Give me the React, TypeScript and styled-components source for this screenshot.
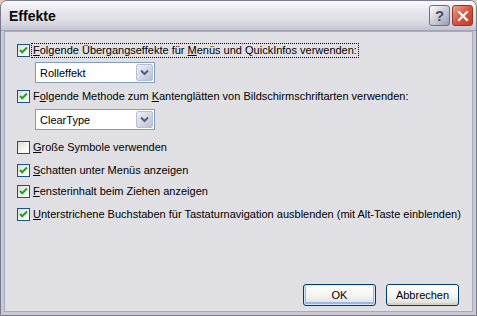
import React from "react";
import styled, { createGlobalStyle } from "styled-components";

const Global = createGlobalStyle`
	html, body {
		margin: 0;
		padding: 0;
		background: #ecc4b8;
	}
	#root {
		width: 477px;
		height: 316px;
	}
`;

const Window = styled.div`
	width: 477px;
	height: 316px;
	box-sizing: border-box;
	border: 1px solid #7a7a8c;
	border-radius: 7px 7px 0 0;
	background: #c9c9d6;
	display: flex;
	flex-direction: column;
	font-family: "Liberation Sans", sans-serif;
	overflow: hidden;
`;

const TitleBar = styled.div`
	height: 29px;
	flex: none;
	display: flex;
	align-items: center;
	padding: 0 3px 0 8px;
	background: linear-gradient(#fbfbfd 0%, #e8e8ee 30%, #dcdce4 70%, #c4c4d2 100%);
	border-bottom: 1px solid #a4a4b6;
`;

const Title = styled.div`
	flex: 1;
	font-weight: bold;
	font-size: 14px;
	color: #0a0a0a;
	padding-top: 1px;
`;

const CapButton = styled.div<{ $close?: boolean }>`
	width: 21px;
	height: 21px;
	box-sizing: border-box;
	margin-left: 2px;
	border-radius: 3px;
	border: 1px solid ${(p) => (p.$close ? "#8a3a34" : "#6c6c84")};
	background: ${(p) =>
		p.$close
			? "linear-gradient(135deg, #f2a390 0%, #d8563e 50%, #c13a26 100%)"
			: "linear-gradient(135deg, #ffffff 0%, #c8c8d6 55%, #9a9ab4 100%)"};
	display: flex;
	align-items: center;
	justify-content: center;
	color: #4a4a66;
	font-weight: bold;
	font-size: 15px;
`;

const Frame = styled.div`
	flex: 1;
	display: flex;
	padding: 0 3px 3px 3px;
`;

const Client = styled.div`
	flex: 1;
	min-width: 0;
	background: #e0dfe3;
	border: 1px solid #a8a8b8;
	display: flex;
	flex-direction: column;
	padding: 0 13px 0 12px;
	font-size: 11px;
	color: #000;
`;

const Row = styled.label<{ $top: number }>`
	display: flex;
	align-items: center;
	gap: 2px;
	margin-top: ${(p) => p.$top}px;
	height: 13px;
`;

const Box = styled.span`
	width: 13px;
	height: 13px;
	box-sizing: border-box;
	border: 1px solid #1c5180;
	background: linear-gradient(135deg, #dcdcd6 0%, #f6f6f2 60%, #ffffff 100%);
	display: flex;
	align-items: center;
	justify-content: center;
	flex: none;
`;

const Label = styled.span<{ $focus?: boolean }>`
	white-space: nowrap;
	padding: 0 1px;
	outline: ${(p) => (p.$focus ? "1px dotted #000" : "none")};
	line-height: 13px;
`;

const Select = styled.div<{ $top: number }>`
	margin: ${(p) => p.$top}px 0 0 18px;
	width: 120px;
	height: 21px;
	box-sizing: border-box;
	border: 1px solid #7f9db9;
	background: #fff;
	display: flex;
	align-items: center;
	padding: 1px;
`;

const SelectText = styled.span`
	flex: 1;
	padding-left: 3px;
`;

const SelectButton = styled.span`
	width: 17px;
	height: 17px;
	box-sizing: border-box;
	border: 1px solid #b4c0d8;
	border-radius: 2px;
	background: linear-gradient(135deg, #f0f0f6 0%, #d2d4e0 60%, #babed0 100%);
	display: flex;
	align-items: center;
	justify-content: center;
`;

const Footer = styled.div`
	margin-top: auto;
	display: flex;
	justify-content: flex-end;
	gap: 10px;
	padding-bottom: 5px;
`;

const Button = styled.div<{ $default?: boolean }>`
	width: 73px;
	height: 22px;
	box-sizing: border-box;
	border: 1px solid #003c74;
	border-radius: 3px;
	background: linear-gradient(#ffffff 0%, #f2f2ee 60%, #dcdcd6 100%);
	box-shadow: ${(p) =>
		p.$default ? "inset 0 0 0 1px #cee7ff, inset 0 -1px 0 2px #98b8ea" : "inset 0 -2px 0 #d6d0c5"};
	display: flex;
	align-items: center;
	justify-content: center;
`;

const Check = () => (
	<svg width="9" height="9" viewBox="0 0 9 9">
		<path d="M1 4 L3.2 6.3 L8 1.5" fill="none" stroke="#21a121" strokeWidth="2" />
	</svg>
);

const Chevron = () => (
	<svg width="9" height="7" viewBox="0 0 9 7">
		<path d="M1 1.5 L4.5 5 L8 1.5" fill="none" stroke="#4d6185" strokeWidth="2" />
	</svg>
);

const X = () => (
	<svg width="12" height="12" viewBox="0 0 12 12">
		<path d="M2 2 L10 10 M10 2 L2 10" stroke="#fff" strokeWidth="2.2" strokeLinecap="square" />
	</svg>
);

const Option = ({
	top,
	checked,
	focus,
	children,
}: {
	top: number;
	checked: boolean;
	focus?: boolean;
	children: React.ReactNode;
}) => (
	<Row $top={top}>
		<Box>{checked && <Check />}</Box>
		<Label $focus={focus}>{children}</Label>
	</Row>
);

export default function App() {
	return (
		<>
			<Global />
			<Window>
				<TitleBar>
					<Title>Effekte</Title>
					<CapButton>?</CapButton>
					<CapButton $close>
						<X />
					</CapButton>
				</TitleBar>
				<Frame>
					<Client>
						<Option top={12} checked focus>
							<u>F</u>olgende Übergangseffekte für <u>M</u>enüs und QuickInfos verwenden:
						</Option>
						<Select $top={5}>
							<SelectText>Rolleffekt</SelectText>
							<SelectButton>
								<Chevron />
							</SelectButton>
						</Select>
						<Option top={7} checked>
							F<u>o</u>lgende Methode zum <u>K</u>antenglätten von Bildschirmschriftarten verwenden:
						</Option>
						<Select $top={6}>
							<SelectText>ClearType</SelectText>
							<SelectButton>
								<Chevron />
							</SelectButton>
						</Select>
						<Option top={11} checked={false}>
							<u>G</u>roße Symbole verwenden
						</Option>
						<Option top={10} checked>
							<u>S</u>chatten unter Menüs anzeigen
						</Option>
						<Option top={8} checked>
							<u>F</u>ensterinhalt beim Ziehen anzeigen
						</Option>
						<Option top={10} checked>
							<u>U</u>nterstrichene Buchstaben für Tastaturnavigation ausblenden (mit Alt-Taste einblenden)
						</Option>
						<Footer>
							<Button $default>OK</Button>
							<Button>Abbrechen</Button>
						</Footer>
					</Client>
				</Frame>
			</Window>
		</>
	);
}
